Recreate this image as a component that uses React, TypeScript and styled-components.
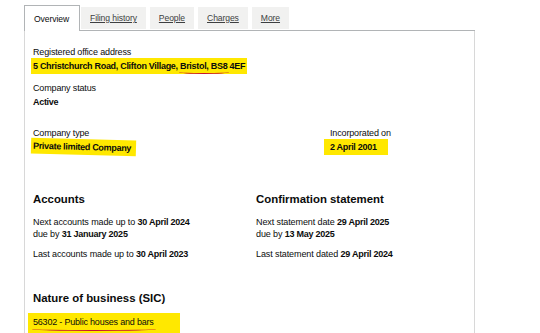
import React from 'react';
import styled, { createGlobalStyle } from 'styled-components';

const GlobalStyle = createGlobalStyle`
  html, body {
    margin: 0;
    padding: 0;
    background: #ffffff;
  }
  body {
    font-family: "Liberation Sans", Arial, sans-serif;
    color: #0b0c0c;
    overflow: hidden;
  }
`;

const Page = styled.div`
  width: 540px;
  height: 333px;
  padding: 5px 0 0 24px;
  box-sizing: border-box;
  overflow: hidden;
`;

const TabList = styled.div`
  display: flex;
  align-items: flex-end;
  gap: 4px;
  width: 451px;
  border-bottom: 1px solid #b1b4b6;
  position: relative;
  z-index: 1;
`;

const Tab = styled.div<{ $active?: boolean }>`
  height: ${(p) => (p.$active ? '26px' : '22px')};
  padding: 0 ${(p) => (p.$active ? '10px 0 9px' : '9px')};
  margin-right: ${(p) => (p.$active ? '-3px' : '0')};
  display: flex;
  align-items: center;
  box-sizing: border-box;
  font-size: 8.6px;
  letter-spacing: -0.1px;
  background: ${(p) => (p.$active ? '#ffffff' : '#f1f1f0')};
  border: ${(p) => (p.$active ? '1px solid #b1b4b6' : 'none')};
  border-bottom: none;
  margin-bottom: ${(p) => (p.$active ? '-1px' : '1px')};
  color: ${(p) => (p.$active ? '#0b0c0c' : '#3d3f41')};
  text-decoration: ${(p) => (p.$active ? 'none' : 'underline')};
  text-underline-offset: 1px;
`;

const Panel = styled.div`
  width: 451px;
  box-sizing: border-box;
  border-left: 1px solid #d8d8d8;
  border-right: 1px solid #d8d8d8;
  padding: 14px 8px 0 8px;
  height: 320px;
`;

const Label = styled.div`
  font-size: 9px;
  line-height: 14px;
  letter-spacing: -0.15px;
  color: #0b0c0c;
`;

const Value = styled.div`
  font-size: 9px;
  line-height: 14px;
  font-weight: bold;
  letter-spacing: -0.3px;
`;

const Field = styled.div<{ $gap?: number }>`
  margin-top: ${(p) => p.$gap ?? 0}px;
`;

const Marker = styled.span<{ $tilt?: number; $l?: number; $r?: number }>`
  position: relative;
  display: inline-block;
  background: #ffe800;
  line-height: 14px;
  padding: 1px ${(p) => p.$r ?? 2}px 1px ${(p) => p.$l ?? 2}px;
  margin: -1px 0 -1px -${(p) => p.$l ?? 2}px;
  transform: rotate(${(p) => p.$tilt ?? 0}deg);
`;

const Scribble = styled.span<{ $drop?: number }>`
  position: relative;
  &::after {
    content: '';
    position: absolute;
    left: -1px;
    right: -2px;
    bottom: ${(p) => -(p.$drop ?? 3)}px;
    height: 3px;
    border-bottom: 1.5px solid #c8102e;
    border-radius: 0 0 50% 50%;
  }
`;

const Row = styled.div<{ $cols: string; $gap?: number }>`
  display: grid;
  grid-template-columns: ${(p) => p.$cols};
  margin-top: ${(p) => p.$gap ?? 0}px;
`;

const Heading = styled.h2`
  margin: 0;
  font-size: 11.4px;
  line-height: 16px;
  font-weight: bold;
`;

const Line = styled.p<{ $gap?: number }>`
  margin: ${(p) => p.$gap ?? 0}px 0 0 0;
  font-size: 9px;
  line-height: 12px;
  letter-spacing: -0.1px;
  b {
    font-weight: bold;
    letter-spacing: -0.25px;
  }
`;

const SicLine = styled.div`
  margin-top: 9px;
  font-size: 9px;
  line-height: 14px;
  letter-spacing: -0.2px;
`;

const SicMarker = styled.span`
  position: relative;
  display: inline-block;
  background: #ffe800;
  margin: -2px 0 0 -5px;
  padding: 2px 26px 8px 5px;
`;

export default function App() {
  return (
    <Page>
      <GlobalStyle />
      <TabList>
        <Tab $active>Overview</Tab>
        <Tab>Filing history</Tab>
        <Tab>People</Tab>
        <Tab>Charges</Tab>
        <Tab>More</Tab>
      </TabList>
      <Panel>
        <Field>
          <Label>Registered office address</Label>
          <Value>
            <Marker>
              5 Christchurch Road, Clifton Village, <Scribble>Bristol, BS8</Scribble> 4EF
            </Marker>
          </Value>
        </Field>
        <Field $gap={8}>
          <Label>Company status</Label>
          <Value>Active</Value>
        </Field>
        <Row $cols="297px 1fr" $gap={17}>
          <div>
            <Label>Company type</Label>
            <Value>
              <Marker $tilt={1.5} $r={5}>Private limited Company</Marker>
            </Value>
          </div>
          <div>
            <Label>Incorporated on</Label>
            <Value>
              <Marker $l={6} $r={11}>2 April 2001</Marker>
            </Value>
          </div>
        </Row>
        <Row $cols="223px 1fr" $gap={37}>
          <div>
            <Heading>Accounts</Heading>
            <Line $gap={9}>
              Next accounts made up to <b>30 April 2024</b>
              <br />
              due by <b>31 January 2025</b>
            </Line>
            <Line $gap={8}>
              Last accounts made up to <b>30 April 2023</b>
            </Line>
          </div>
          <div>
            <Heading>Confirmation statement</Heading>
            <Line $gap={9}>
              Next statement date <b>29 April 2025</b>
              <br />
              due by <b>13 May 2025</b>
            </Line>
            <Line $gap={8}>
              Last statement dated <b>29 April 2024</b>
            </Line>
          </div>
        </Row>
        <Field $gap={30}>
          <Heading>Nature of business (SIC)</Heading>
          <SicLine>
            <SicMarker>
              <Scribble $drop={4}>56302 - Public houses and bars</Scribble>
            </SicMarker>
          </SicLine>
        </Field>
      </Panel>
    </Page>
  );
}
